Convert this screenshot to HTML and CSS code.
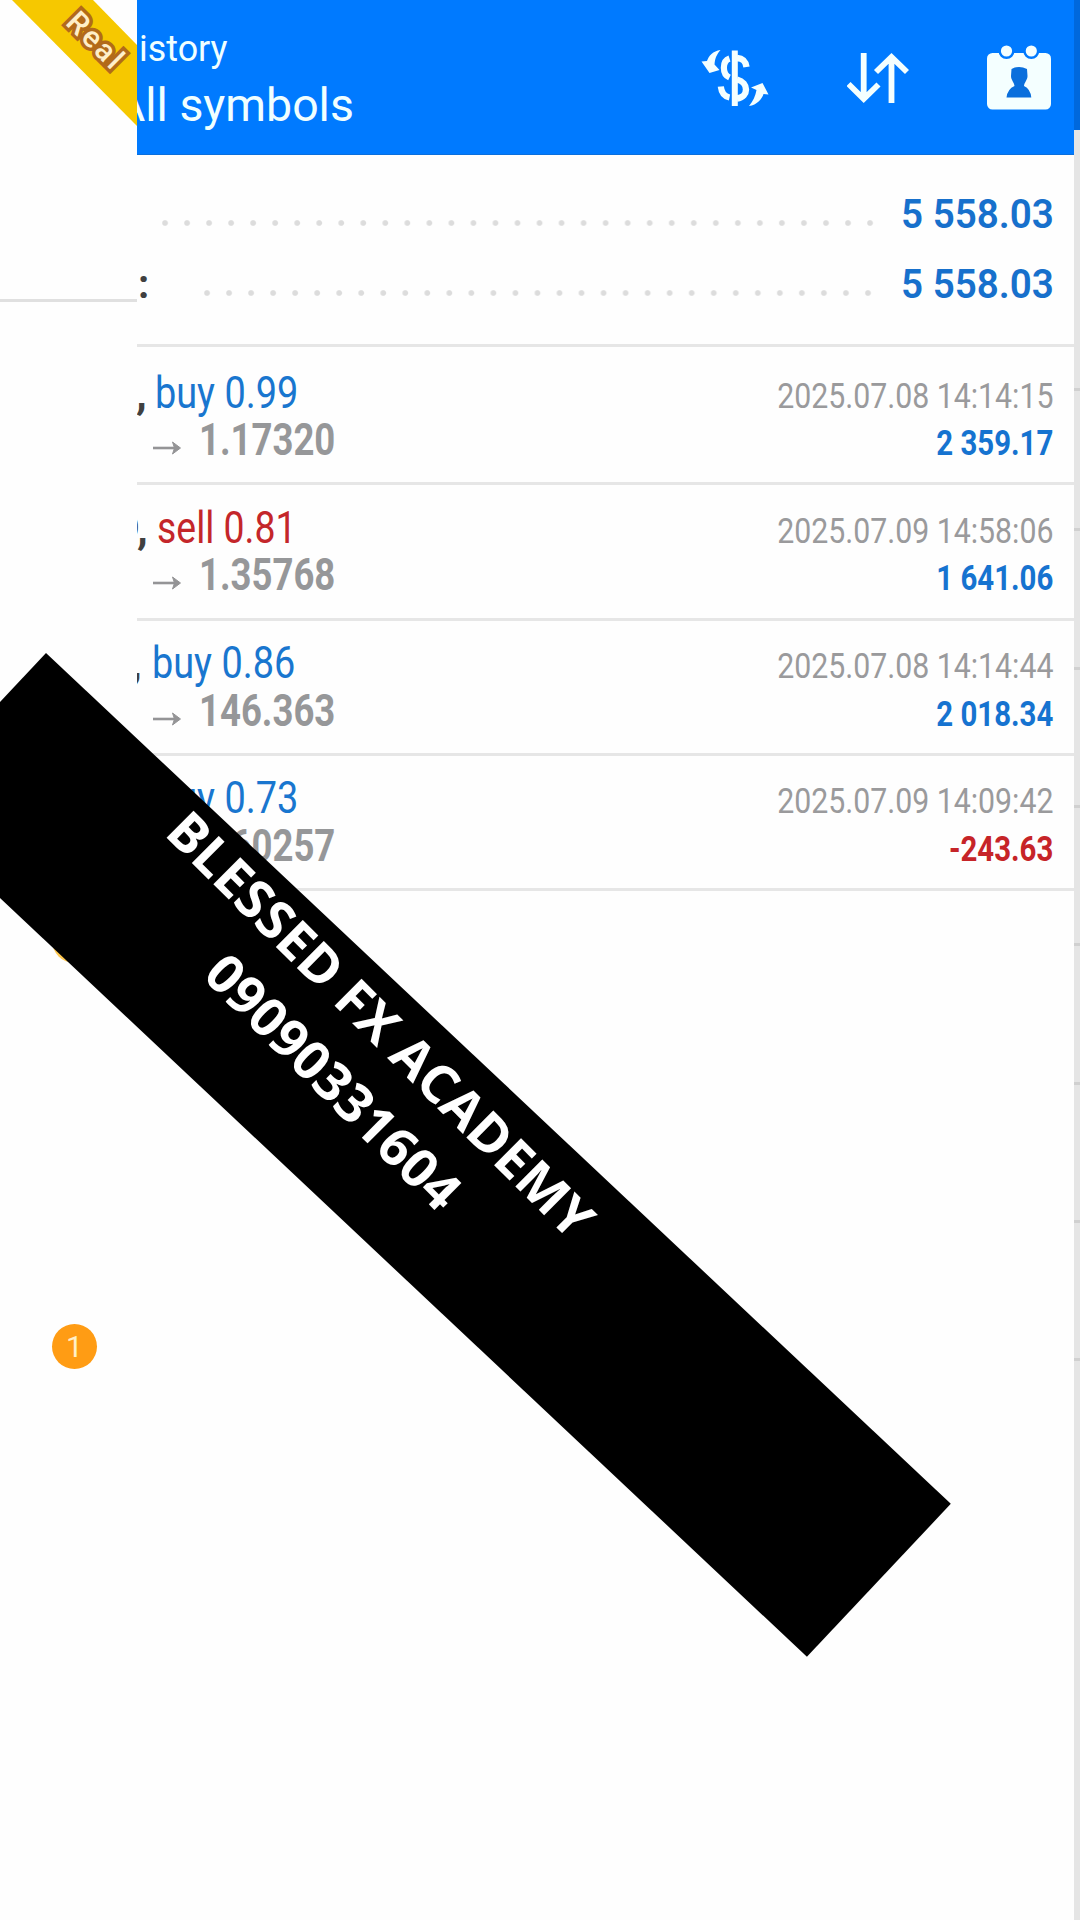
FILE: index.html
```
<!DOCTYPE html>
<html lang="en">
<head>
<meta charset="utf-8">
<title>History</title>
<link rel="stylesheet" href="styles.css">
</head>
<body>
<div class="app">
  <aside class="drawer">
    <div class="account">
      <div class="ribbon"><span class="ribbon-text">Real</span></div>
    </div>
    <div class="badge badge-top"></div>
    <div class="badge badge-count">1</div>
  </aside>

  <main class="history">
    <header class="bar">
      <div class="titles">
        <div class="title">istory</div>
        <div class="subtitle">All symbols</div>
      </div>
      <div class="actions">
        <svg width="68" height="155" viewBox="701 0 68 155" fill="none" stroke="#f4ffff" stroke-width="6.2">
          <path d="M734.8 50.5V106" stroke-width="6"/>
          <path d="M729.5 58.5C722 61 722 74 729.5 77.500"/>
          <path d="M737 58C743 58.5 745.5 61 746.5 67M737 79.5C749 82.5 749 97 737 98.5" stroke-width="6.4"/>
          <path d="M729.5 97.5C724.5 96.5 721.5 93 720.8 86.500"/>
          <path d="M701.5 61.500L707 61C708.500 56 713 51 720.5 50C717 54 715 58 714.500 64.500L719.5 70L709.5 73Z" fill="#f4ffff" stroke="none"/>
          <path d="M751 87.500L762.5 83L768.5 94.500L763.500 94C762 99 757 105 749 106C753 101 755.500 96 756.500 90Z" fill="#f4ffff" stroke="none"/>
        </svg>
        <svg width="62" height="155" viewBox="847 0 62 155" fill="none" stroke="#f4ffff" stroke-width="5.8">
          <path d="M863.7 53V100M848.500 84L863.7 99L878.500 84.500"/>
          <path d="M891.500 103V56M876 72L891.500 57L907 72"/>
        </svg>
        <svg width="64" height="155" viewBox="987 0 64 155">
          <rect x="987" y="53" width="64" height="56.500" rx="5.500" fill="#f4ffff"/>
          <circle cx="1006.500" cy="51" r="6.800" fill="#f4ffff" stroke="#007aff" stroke-width="2.400"/>
          <circle cx="1031.300" cy="51" r="6.800" fill="#f4ffff" stroke="#007aff" stroke-width="2.400"/>
          <path d="M1011.500 69Q1019 65 1027 69L1027.500 76C1027.500 80 1024.500 82 1024 86Q1030.500 89 1031.300 97.500H1006.500Q1007.500 89 1014.500 86C1014 82 1011 80 1011 76Z" fill="#0a6fdc"/>
        </svg>
      </div>
    </header>

    <section class="summary">
      <div class="total total-first"><span class="dots"></span><span class="sum">5 558.03</span></div>
      <div class="total"><span class="colon">:</span><span class="dots"></span><span class="sum">5 558.03</span></div>
    </section>

    <section class="deals">
      <article class="deal">
        <div class="line"><span class="symbol symbol-1">,</span><span class="side buy">buy 0.99</span><span class="date">2025.07.08 14:14:15</span></div>
        <div class="line"><svg class="arrow" viewBox="0 0 28 14"><path d="M0 7H25"/><path class="arrow-head" d="M19.500 1L27.500 7L19.500 13L21.500 7Z"/></svg><span class="price">1.17320</span><span class="profit">2 359.17</span></div>
      </article>
      <article class="deal">
        <div class="line"><span class="symbol symbol-2">D,</span><span class="side sell">sell 0.81</span><span class="date">2025.07.09 14:58:06</span></div>
        <div class="line"><svg class="arrow" viewBox="0 0 28 14"><path d="M0 7H25"/><path class="arrow-head" d="M19.500 1L27.500 7L19.500 13L21.500 7Z"/></svg><span class="price">1.35768</span><span class="profit">1 641.06</span></div>
      </article>
      <article class="deal">
        <div class="line"><span class="symbol symbol-3">,</span><span class="side buy">buy 0.86</span><span class="date">2025.07.08 14:14:44</span></div>
        <div class="line"><svg class="arrow" viewBox="0 0 28 14"><path d="M0 7H25"/><path class="arrow-head" d="M19.500 1L27.500 7L19.500 13L21.500 7Z"/></svg><span class="price">146.363</span><span class="profit">2 018.34</span></div>
      </article>
      <article class="deal">
        <div class="line"><span class="symbol"></span><span class="side buy">buy 0.73</span><span class="date">2025.07.09 14:09:42</span></div>
        <div class="line"><svg class="arrow" viewBox="0 0 28 14"></svg><span class="price">0.60257</span><span class="profit loss">-243.63</span></div>
      </article>
    </section>
  </main>

  <div class="edge">
    <div class="edge-bar"></div>
    <div class="edge-list"></div>
  </div>

  <div class="banner"></div>
  <div class="banner-text">BLESSED FX ACADEMY&nbsp;<br>09090331604</div>
</div>
</body>
</html>
```
FILE: styles.css
```
* { box-sizing: border-box; }

body {
  margin: 0;
  background: #fefefe;
  font-family: Roboto, "Liberation Sans", sans-serif;
}

.app {
  position: relative;
  display: flex;
  width: 1080px;
  height: 1920px;
  overflow: hidden;
}

/* Drawer on the left */
.drawer {
  position: relative;
  width: 137px;
  overflow: hidden;
}

.account {
  height: 302px;
  border-bottom: 3px solid #e0e0e0;
}

.ribbon {
  width: 137px;
  height: 126px;
  background: #f6c800;
  clip-path: polygon(12px 0, 93px 0, 137px 45px, 137px 126px);
}

.ribbon-text {
  position: absolute;
  left: 51px;
  top: 24px;
  width: 90px;
  line-height: 34px;
  text-align: center;
  font-size: 30px;
  font-weight: 500;
  letter-spacing: 2.500px;
  color: #ffefc8;
  -webkit-text-stroke: 7px #b26a1a;
  paint-order: stroke fill;
  transform: rotate(45deg);
}

.badge {
  position: absolute;
  left: 52px;
  width: 45px;
  height: 45px;
  border-radius: 50%;
  background: #ff9c14;
  color: #fff0c8;
  font-size: 30px;
  line-height: 45px;
  text-align: center;
}

.badge-top { top: 918px; background: #ffc850; }
.badge-count { top: 1324px; }

/* History screen */
.history {
  width: 937px;
  overflow: hidden;
}

.bar {
  display: flex;
  justify-content: space-between;
  height: 155px;
  padding-right: 23px;
  background: #007aff;
  border-bottom: 1px solid #0b6fdc;
  color: #f0ffff;
}

.title {
  margin: 24.500px 0 0 2px;
  font-size: 37px;
  line-height: 48px;
  transform: scaleX(0.970);
  transform-origin: 0 0;
  white-space: nowrap;
}

.subtitle {
  margin: 4.500px 0 0 -22px;
  font-size: 47px;
  line-height: 56px;
  transform-origin: 0 0;
  transform: scaleX(0.988);
  white-space: nowrap;
}

.actions {
  display: flex;
  gap: 78px;
}

.summary {
  height: 191.500px;
  padding: 35px 21px 0 0;
  border-bottom: 3px solid #e6e6e6;
}

.total {
  display: flex;
  height: 70.300px;
  line-height: 50px;
}

.colon {
  width: 66.500px;
  padding-left: 1px;
  font-size: 40px;
  font-weight: 700;
  color: #404040;
}

.dots {
  flex: 1;
  height: 6px;
  margin: 29.500px 24.500px 0 0;
  background: radial-gradient(circle at 3px 3px, #dcdcdc 2.300px, transparent 3.400px) 0 0 / 22.040px 6px repeat-x;
}

.total-first .dots {
  margin-left: 25px;
  margin-right: 21.500px;
}

.sum {
  width: 152.500px;
  font-size: 40px;
  font-weight: 600;
  color: #1770cc;
  white-space: nowrap;
  transform: scaleX(0.965);
  transform-origin: 0 0;
}

.deals { padding-top: 3.500px; }

.deal {
  height: 135.300px;
  padding: 18.500px 21px 0 0;
  border-bottom: 3px solid #e6e6e6;
}

.line {
  display: flex;
  align-items: baseline;
  height: 47.500px;
  line-height: 48px;
  white-space: nowrap;
}

.symbol {
  width: 18px;
  font-size: 44px;
  font-weight: 700;
  color: #404040;
}

.symbol-1 { text-indent: -1px; }
.symbol-2 { width: 20px; text-indent: -26px; }
.symbol-3 { width: 15px; text-indent: -6px; }

.side {
  font-size: 44px;
  transform: scaleX(0.86);
  transform-origin: 0 0;
}

.buy { color: #1976cf; }

.sell {
  color: #c4262a;
  transform: scaleX(0.85);
}

.date,
.profit {
  margin-left: auto;
  font-size: 35px;
  transform-origin: 100% 0;
}

.date {
  color: #9a9a9c;
  transform: scaleX(0.865);
}

.profit {
  font-weight: 700;
  color: #1673d0;
  transform: scaleX(0.84);
}

.loss { color: #c62428; }

.arrow {
  width: 28px;
  height: 14px;
  margin: 0 18px 1px 16px;
  fill: none;
  stroke: #949496;
  stroke-width: 2.600px;
}

.arrow-head {
  fill: #949496;
  stroke-width: 1px;
}

.price {
  font-size: 44px;
  font-weight: 700;
  color: #969799;
  transform: scaleX(0.83);
  transform-origin: 0 0;
}

/* Screen behind, visible at the right edge */
.edge { width: 6px; }

.edge-bar {
  height: 130px;
  background: #0068dc;
}

.edge-list {
  height: 1790px;
  background:
    linear-gradient(#d0d0d0, #d0d0d0) 0 258px / 6px 3px no-repeat,
    repeating-linear-gradient(transparent 0 135.500px, #d0d0d0 135.500px 138.300px) 0 263px / 6px 968px no-repeat,
    #e5e5e5;
}

/* Diagonal banner over everything */
.banner {
  position: absolute;
  left: 46px;
  top: 653px;
  width: 1242px;
  height: 210px;
  background: #000;
  transform: rotate(43.240deg);
  transform-origin: 0 0;
}

.banner-text {
  position: absolute;
  left: 40px;
  top: 981px;
  width: 640px;
  line-height: 74px;
  text-align: center;
  font-family: "Open Sans", "Noto Sans", sans-serif;
  font-size: 53.300px;
  font-weight: 700;
  color: #fff;
  white-space: nowrap;
  transform: rotate(45deg);
}
```
